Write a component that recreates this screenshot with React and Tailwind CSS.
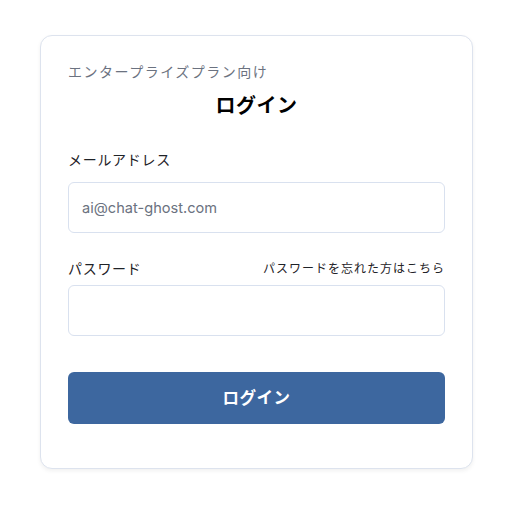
export default function App() {
    return (
        <main className="min-h-screen bg-white pt-[35px] pl-[40px]" style={{ fontFamily: 'Inter, "Noto Sans CJK JP", sans-serif' }}>
            <div className="w-[433px] rounded-xl border border-[#dde3ee] bg-white px-[27px] pt-[26px] pb-[44px] shadow-[0_2px_4px_rgba(0,0,0,0.06)]">
                <p className="text-[14px] leading-5 tracking-[1.5px] text-[#6b7280]">エンタープライズプラン向け</p>
                <h1 className="mt-[12px] text-center text-[20px] font-bold leading-6 tracking-[0.5px] text-black">ログイン</h1>

                {/* Email */}
                <label className="mt-[32px] block text-[14px] leading-5 tracking-[0.7px] text-[#1f2328]">メールアドレス</label>
                <input
                    type="email"
                    placeholder="ai@chat-ghost.com"
                    className="mt-[12px] block h-[51px] w-full rounded-md border border-[#d9e1ef] px-[13px] text-[14.6px] text-[#1f2328] placeholder:text-[#6b7280] outline-none"
                />

                {/* Password */}
                <div className="mt-[26px] flex items-end justify-between">
                    <label className="text-[14px] leading-5 tracking-[0.7px] text-[#1f2328]">パスワード</label>
                    <a href="#" className="text-[12px] leading-5 tracking-[1px] text-[#1f2328]">パスワードを忘れた方はこちら</a>
                </div>
                <input
                    type="password"
                    className="mt-[6px] block h-[51px] w-full rounded-md border border-[#d9e1ef] px-[14px] text-[14px] outline-none"
                />

                <button className="mt-[36px] flex h-[52px] w-full items-center justify-center rounded-md bg-[#3d679f] text-[16.5px] font-bold tracking-[0.5px] text-white">
                    ログイン
                </button>
            </div>
        </main>
    );
}
